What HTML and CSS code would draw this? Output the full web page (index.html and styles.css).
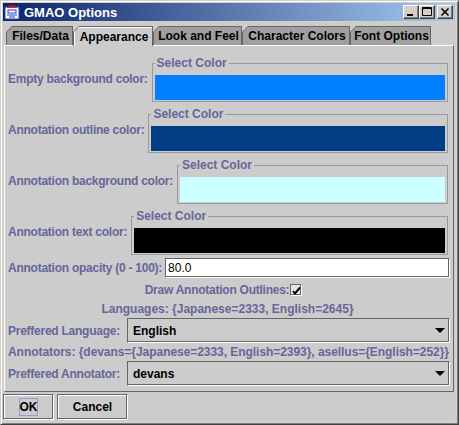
FILE: index.html
```html
<!DOCTYPE html>
<html lang="en">
<head>
    <meta charset="UTF-8">
    <title>GMAO Options</title>
    <link rel="stylesheet" href="styles.css">
</head>
<body>
    <div class="window">
        <div class="titlebar">
            <svg class="app-icon" width="16" height="16" viewBox="0 0 16 16">
                <rect x="1" y="3" width="14" height="12" fill="#fff" stroke="#2040c0"/>
                <path d="M3 4 L5 1 L6 4 L8 0 L10 4 L11 1 L13 4 Z" fill="#e01010"/>
                <rect x="4" y="6" width="8" height="3" fill="none" stroke="#2040c0"/>
                <path d="M3 11 H13 M5 13 H11" stroke="#2040c0"/>
            </svg>
            <span class="title">GMAO Options</span>
            <div class="caption-buttons">
                <span class="caption-btn">
                    <svg width="14" height="12" viewBox="0 0 14 12"><rect x="3" y="8" width="6" height="2" fill="#000"/></svg>
                </span>
                <span class="caption-btn">
                    <svg width="14" height="12" viewBox="0 0 14 12"><path d="M2.5 1.5 H11.5 V9.5 H2.5 Z M2.5 2.5 H11.5" fill="none" stroke="#000"/></svg>
                </span>
                <span class="caption-btn caption-close">
                    <svg width="14" height="12" viewBox="0 0 14 12"><path d="M3.5 2.5 L10.5 9.5 M10.5 2.5 L3.5 9.5" stroke="#000" stroke-width="1.6"/></svg>
                </span>
            </div>
        </div>

        <div class="client">
            <div class="tabs">
                <div class="tab tab-files"><span class="tab-face">Files/Data</span></div>
                <div class="tab tab-appearance tab-selected"><span class="tab-face">Appearance</span></div>
                <div class="tab tab-look"><span class="tab-face">Look and Feel</span></div>
                <div class="tab tab-chars"><span class="tab-face">Character Colors</span></div>
                <div class="tab tab-fonts"><span class="tab-face">Font Options</span></div>
            </div>

            <div class="panel">
                <div class="color-row">
                    <span class="field-label">Empty background color:</span>
                    <fieldset class="color-group">
                        <legend>Select Color</legend>
                        <div class="swatch swatch-empty"></div>
                    </fieldset>
                </div>
                <div class="color-row">
                    <span class="field-label">Annotation outline color:</span>
                    <fieldset class="color-group">
                        <legend>Select Color</legend>
                        <div class="swatch swatch-outline"></div>
                    </fieldset>
                </div>
                <div class="color-row">
                    <span class="field-label">Annotation background color:</span>
                    <fieldset class="color-group">
                        <legend>Select Color</legend>
                        <div class="swatch swatch-background"></div>
                    </fieldset>
                </div>
                <div class="color-row">
                    <span class="field-label">Annotation text color:</span>
                    <fieldset class="color-group">
                        <legend>Select Color</legend>
                        <div class="swatch swatch-text"></div>
                    </fieldset>
                </div>

                <div class="input-row">
                    <span class="field-label">Annotation opacity (0 - 100):</span>
                    <div class="text-field">80.0</div>
                </div>

                <div class="check-row">
                    <span class="field-label">Draw Annotation Outlines:</span>
                    <span class="checkbox">
                        <svg width="9" height="9" viewBox="0 0 9 9"><path d="M1 5 L3 7.5 L8 1.5" fill="none" stroke="#000" stroke-width="2"/></svg>
                    </span>
                </div>

                <div class="info-row info-center">Languages: {Japanese=2333, English=2645}</div>

                <div class="combo-row">
                    <span class="field-label combo-label">Preffered Language:</span>
                    <div class="combo">
                        <span class="combo-value">English</span>
                        <svg class="combo-arrow" width="10" height="5" viewBox="0 0 10 5"><path d="M0 0 H10 L5 5 Z" fill="#000"/></svg>
                    </div>
                </div>

                <div class="info-row info-wide">Annotators: {devans={Japanese=2333, English=2393}, asellus={English=252}}</div>

                <div class="combo-row">
                    <span class="field-label combo-label">Preffered Annotator:</span>
                    <div class="combo">
                        <span class="combo-value">devans</span>
                        <svg class="combo-arrow" width="10" height="5" viewBox="0 0 10 5"><path d="M0 0 H10 L5 5 Z" fill="#000"/></svg>
                    </div>
                </div>
            </div>

            <div class="button-bar">
                <button class="btn btn-ok"><span class="focus-ring">OK</span></button>
                <button class="btn btn-cancel">Cancel</button>
            </div>
        </div>
    </div>
</body>
</html>
```

FILE: styles.css
```css
:root {
    --frame: #d4d0c8;
    --control: #cccccc;
    --shadow: #999999;
    --dark: #666666;
    --label: #666699;
    --focus: #9999cc;
}

body {
    margin: 0;
    font-family: "Liberation Sans", Arial, sans-serif;
    font-size: 12px;
}

.window {
    width: 459px;
    height: 425px;
    box-sizing: border-box;
    display: flex;
    flex-direction: column;
    background: var(--frame);
    border: 1px solid;
    border-color: var(--frame) #404040 #404040 var(--frame);
    box-shadow: inset 1px 1px #fff, inset -1px -1px #808080;
    padding: 2px 3px 3px 2px;
}

/* title bar */

.titlebar {
    height: 18px;
    flex: none;
    display: flex;
    align-items: center;
    padding: 0 2px 0 1px;
    margin-bottom: 1px;
    background: linear-gradient(to right, #0a246a, #a6caf0);
}

.app-icon {
    flex: none;
}

.title {
    margin-left: 4px;
    color: #fff;
    font-weight: bold;
    font-size: 13px;
}

.caption-buttons {
    margin-left: auto;
    display: flex;
}

.caption-btn {
    width: 16px;
    height: 14px;
    box-sizing: border-box;
    display: flex;
    align-items: center;
    justify-content: center;
    background: var(--frame);
    border: 1px solid;
    border-color: #fff #404040 #404040 #fff;
    box-shadow: inset -1px -1px #808080;
}

.caption-close {
    margin-left: 2px;
}

/* client area */

.client {
    flex: 1;
    display: flex;
    flex-direction: column;
    background: var(--control);
}

.tabs {
    display: flex;
    align-items: flex-start;
    height: 23px;
    box-sizing: border-box;
    padding: 4px 0 0 3px;
}

.tab {
    height: 19px;
    box-sizing: border-box;
    padding: 1px 1px 0 1px;
    background: var(--dark);
    clip-path: polygon(0 6px, 6px 0, 100% 0, 100% 100%, 0 100%);
}

.tab-face {
    height: 100%;
    display: flex;
    align-items: center;
    justify-content: center;
    padding-left: 2px;
    background: #a0a0a0;
    clip-path: polygon(0 5px, 5px 0, 100% 0, 100% 100%, 0 100%);
    color: #000;
    font-weight: bold;
    white-space: nowrap;
}

.tab-selected {
    height: 20px;
    z-index: 1;
}

.tab-selected .tab-face {
    background: var(--control);
    box-shadow: inset 1px 1px #fff;
}

.tab-files { width: 67px; }
.tab-appearance { width: 80px; }
.tab-look { width: 89px; }
.tab-chars { width: 108px; }
.tab-fonts { width: 81px; }

.panel {
    height: 347px;
    flex: none;
    box-sizing: border-box;
    margin: 0 1px;
    padding: 10px 3px 0 3px;
    border: 1px solid;
    border-color: #fff var(--dark) var(--dark) #fff;
    display: flex;
    flex-direction: column;
}

.field-label {
    color: var(--label);
    font-weight: bold;
    white-space: nowrap;
    letter-spacing: -0.25px;
}

/* colour choosers */

.color-row {
    height: 46px;
    display: flex;
    align-items: center;
    gap: 4px;
}

.color-row + .color-row {
    margin-top: 5px;
}

.color-group {
    flex: 1;
    margin: 0 2px 0 0;
    padding: 5px 2px 1px 2px;
    border: 1px solid var(--shadow);
    min-width: 0;
}

.color-group legend {
    padding: 0 2px;
    line-height: 14px;
    color: var(--label);
    font-weight: bold;
}

.swatch {
    height: 25px;
}

.swatch-empty { background: #0080ff; }
.swatch-outline { background: #003d85; }
.swatch-background { background: #ccffff; }
.swatch-text { background: #000; }

/* inputs */

.input-row {
    height: 20px;
    margin-top: 3px;
    display: flex;
    align-items: center;
    gap: 3px;
}

.text-field {
    flex: 1;
    height: 20px;
    box-sizing: border-box;
    display: flex;
    align-items: center;
    padding-left: 2px;
    background: #fff;
    border: 1px solid;
    border-color: var(--dark) #fff #fff var(--dark);
    box-shadow: inset -1px -1px var(--dark);
}

.check-row {
    height: 20px;
    margin-top: 2px;
    display: flex;
    align-items: center;
    justify-content: center;
    gap: 1px;
}

.checkbox {
    width: 12px;
    height: 12px;
    box-sizing: border-box;
    display: flex;
    align-items: center;
    justify-content: center;
    margin-right: 11px;
    background: #e6e6e6;
    border: 1px solid;
    border-color: var(--dark) #fff #fff var(--dark);
    box-shadow: inset -1px -1px var(--dark);
}

.info-row {
    height: 17px;
    display: flex;
    align-items: center;
    color: var(--label);
    font-weight: bold;
    white-space: nowrap;
}

.info-center {
    justify-content: center;
    padding-right: 3px;
}

.info-wide {
    letter-spacing: -0.05px;
}

.info-row + .combo-row {
    margin-top: 1px;
}

.combo-row {
    height: 25px;
    display: flex;
    align-items: center;
}

.combo-label {
    width: 119px;
    flex: none;
}

.combo {
    flex: 1;
    height: 25px;
    box-sizing: border-box;
    display: flex;
    align-items: center;
    justify-content: space-between;
    padding: 0 4px 0 5px;
    background: var(--control);
    border: 1px solid;
    border-color: var(--dark) #fff #fff var(--dark);
    box-shadow: inset -1px -1px var(--dark);
    font-weight: bold;
    color: #000;
}

/* buttons */

.button-bar {
    flex: 1;
    display: flex;
    align-items: flex-start;
    gap: 2px;
    padding-top: 2px;
}

.btn {
    height: 26px;
    box-sizing: border-box;
    padding: 0;
    display: flex;
    align-items: center;
    justify-content: center;
    font-family: inherit;
    font-size: 12px;
    font-weight: bold;
    color: #000;
    background: var(--control);
    border: 1px solid;
    border-color: var(--dark) #fff #fff var(--dark);
    box-shadow: inset -1px -1px var(--dark), inset 1px 1px #fff;
}

.btn-ok { width: 51px; }
.btn-cancel { width: 71px; margin-left: 1px; }

.focus-ring {
    width: 19px;
    height: 18px;
    box-sizing: border-box;
    display: flex;
    align-items: center;
    justify-content: center;
    border: 1px solid var(--focus);
}
```
